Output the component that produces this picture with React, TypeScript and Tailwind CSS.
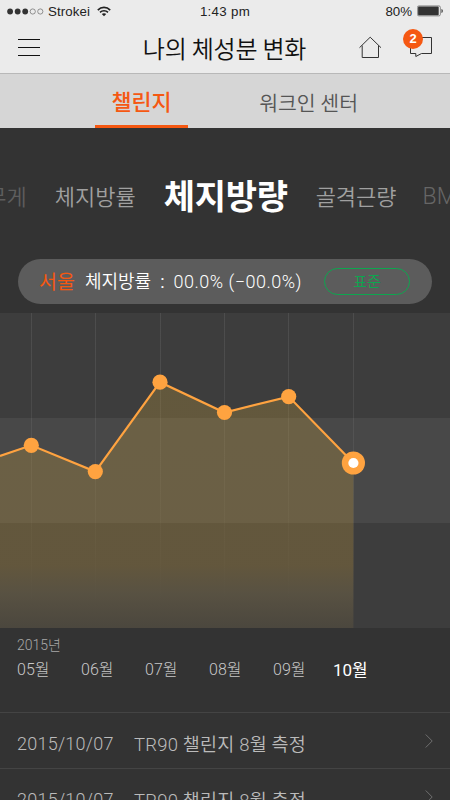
import clsx from "clsx";

const metrics = [
  { label: "몸무게", className: "text-[22px] font-[350] text-[#5e5e5e]" },
  { label: "체지방률", className: "text-[22px] font-[350] text-[#a0a0a0]" },
  { label: "체지방량", className: "text-[34px] font-bold text-white tracking-[-0.3px]" },
  { label: "골격근량", className: "text-[22px] font-[350] text-[#a0a0a0]" },
  { label: "BMI", className: "-ml-0.5 pt-1 font-['Roboto'] text-[23px] font-light text-[#666]" },
];

const points = [
  { month: "05", x: 31.3, y: 132.3 },
  { month: "06", x: 95.3, y: 158.6 },
  { month: "07", x: 160, y: 69.2 },
  { month: "08", x: 224.5, y: 99.5 },
  { month: "09", x: 288.7, y: 83.6 },
  { month: "10", x: 353.4, y: 150 },
];

const records = [
  { date: "2015/10/07", title: "TR90 챌린지 8월 측정" },
  { date: "2015/10/07", title: "TR90 챌린지 8월 측정" },
];

function StatusBar() {
  return (
    <div className="grid h-6 grid-cols-[1fr_auto_1fr] items-center pl-[7px] pr-[7px] font-['Liberation_Sans'] text-[13.3px] leading-none text-[#222]">
      <div className="-mt-px flex items-center">
        <svg width="37" height="7" viewBox="0 0 37 7">
          {[0, 1, 2, 3, 4].map((i) => (
            <circle
              key={i}
              cx={3.1 + i * 7.55}
              cy="3.5"
              r={i < 3 ? 2.9 : 2.6}
              fill={i < 3 ? "#333" : "none"}
              stroke={i < 3 ? "none" : "#555"}
              strokeWidth="0.6"
            />
          ))}
        </svg>
        <span className="ml-[4px] tracking-[0.1px]">Strokei</span>
        <svg className="ml-[7px]" width="14" height="11" viewBox="0 0 14 11" fill="none" stroke="#222" strokeWidth="1.6">
          <path d="M0.8 4.1C4.3 0.5 9.7 0.5 13.2 4.1" />
          <path d="M3 6.4C5.3 4.1 8.7 4.1 11 6.4" />
          <path d="M7 10.3L4.8 8.1C6 6.9 8 6.9 9.2 8.1Z" fill="#222" stroke="none" />
        </svg>
      </div>
      <span className="-mt-px tracking-[0.3px]">1:43 pm</span>
      <div className="-mt-px flex items-center justify-end">
        <span className="mr-[5px]">80%</span>
        <svg width="26" height="12" viewBox="0 0 26 12">
          <rect x="0.4" y="0.9" width="23" height="10" rx="1.5" fill="none" stroke="#666" strokeWidth="0.7" />
          <rect x="1.1" y="1.6" width="20.6" height="8.7" rx="0.8" fill="#333" />
          <path d="M24.5 4C26.2 4.6 26.2 7.3 24.5 8Z" fill="#333" />
        </svg>
      </div>
    </div>
  );
}

function Header() {
  return (
    <header className="flex h-[49px] items-center justify-between pl-[18px] pr-[17px]">
      <button aria-label="메뉴" className="w-[73px]">
        <svg width="22" height="19" viewBox="0 0 22 19" stroke="#111" strokeWidth="1.1">
          <path d="M0 0.5H22M0 8.5H22M0 16.5H22" />
        </svg>
      </button>
      <h1 className="-mt-px text-[24px] font-[350] leading-none tracking-[-0.2px] text-[#111]">
        나의 체성분 변화
      </h1>
      <div className="-mt-[3px] flex w-[75px] items-center justify-between">
        <svg width="24" height="24" viewBox="0 0 24 24" fill="none" stroke="#333" strokeWidth="1">
          <path d="M1.5 12.7L12.2 2.2L23 12.7" />
          <path d="M4.2 10.5V22.5H20.5V10.5" />
        </svg>
        <div className="relative">
          <svg width="24" height="24" viewBox="0 0 24 24" fill="none" stroke="#333" strokeWidth="1">
            <path d="M1.5 2.5H22.5V18.5H12.5L6.8 21.5V18.5H1.5V2.5Z" />
          </svg>
          <span className="absolute -left-[6px] -top-[6.5px] flex size-[20px] items-center justify-center rounded-full bg-[#f55812] font-['Liberation_Sans'] text-[13px] font-bold leading-none text-white">
            2
          </span>
        </div>
      </div>
    </header>
  );
}

function Tabs() {
  return (
    <nav className="flex h-[55px] justify-between border-t border-t-[#b8b8b8] bg-[#d6d6d6] pl-[95px] pr-[92px] leading-none">
      <button className="flex w-[93px] items-center justify-center border-b-[3px] border-[#f55812] pt-[3px] text-[21.8px] font-medium text-[#f55812]">
        챌린지
      </button>
      <button className="flex items-center pt-[2px] text-[20.5px] font-[350] text-[#555]">
        워크인 센터
      </button>
    </nav>
  );
}

function Chart() {
  const line = points.map((p) => `L${p.x} ${p.y}`).join("");

  return (
    <svg className="block" width="450" height="315" viewBox="0 0 450 315">
      <defs>
        <linearGradient id="area" x1="0" y1="0" x2="0" y2="315" gradientUnits="userSpaceOnUse">
          <stop offset="0" stopColor="#d4ac3c" stopOpacity="0.25" />
          <stop offset="0.8" stopColor="#d4a43c" stopOpacity="0.25" />
          <stop offset="0.89" stopColor="#b99a55" stopOpacity="0.22" />
          <stop offset="1" stopColor="#857042" stopOpacity="0.2" />
        </linearGradient>
        <linearGradient id="grid" x1="0" y1="0" x2="0" y2="315" gradientUnits="userSpaceOnUse">
          <stop offset="0.15" stopColor="#fff" stopOpacity="0.08" />
          <stop offset="0.5" stopColor="#fff" stopOpacity="0.05" />
          <stop offset="0.93" stopColor="#fff" stopOpacity="0" />
        </linearGradient>
      </defs>
      <rect width="450" height="315" fill="#3d3d3d" />
      <rect y="105" width="450" height="105" fill="#484848" />
      {points.map((p) => (
        <rect key={p.month} x={Math.floor(p.x)} width="1" height="315" fill="url(#grid)" />
      ))}
      <path d={`M0 143${line}V315H0Z`} fill="url(#area)" />
      <path d={`M0 143${line}`} fill="none" stroke="#ffa340" strokeWidth="2.2" />
      {points.slice(0, -1).map((p) => (
        <circle key={p.month} cx={p.x} cy={p.y} r="7.6" fill="#ffa340" />
      ))}
      <circle cx="353.4" cy="150" r="11.6" fill="#ffa340" />
      <circle cx="353.4" cy="150" r="5.1" fill="#fff" />
    </svg>
  );
}

export default function App() {
  return (
    <div className="h-[800px] w-[450px] overflow-hidden bg-[#333] font-['Noto_Sans_CJK_KR',sans-serif]">
      <div className="bg-[#ebebeb]">
        <StatusBar />
        <Header />
      </div>
      <Tabs />

      {/* Metric carousel */}
      <div className="-ml-[34px] flex h-[131px] items-center gap-7 whitespace-nowrap pt-[2px] leading-none">
        {metrics.map((m) => (
          <span key={m.label} className={clsx("shrink-0", m.className)}>
            {m.label}
          </span>
        ))}
      </div>

      {/* Current value */}
      <div className="mx-[18px] flex h-[45px] items-center rounded-full bg-[#5c5c5c] pl-[21px] pr-[22px] font-['Roboto','Noto_Sans_CJK_KR',sans-serif] text-[18px] leading-none text-white">
        <span className="pt-[2px] text-[19.5px] text-[#f55812]">서울</span>
        <span className="ml-[10px] pt-px font-[350]">체지방률</span>
        <span className="ml-[9px]">:</span>
        <span className="ml-[9px] font-light tracking-[0.5px]">00.0% (−00.0%)</span>
        <span className="ml-auto flex h-[27px] w-[86px] items-center justify-center rounded-full border-[1.5px] border-[#0da64f] pt-px text-[15px] font-[350] text-[#0da64f]">
          표준
        </span>
      </div>

      <div className="mt-[9px]">
        <Chart />
      </div>

      {/* Month axis */}
      <div className="h-[84px] pl-[17px] pt-[9px] font-['Roboto','Noto_Sans_CJK_KR',sans-serif] leading-none text-[#c8c8c8]">
        <p className="text-[14px] font-light leading-4 text-[#a8a8a8]">2015년</p>
        <div className="mt-[8px] flex h-[18px] items-center text-[16px] font-light">
          {points.map((p, i) => (
            <span
              key={p.month}
              className={clsx(
                i === points.length - 1
                  ? "-ml-1 text-[17px] font-normal text-white"
                  : "w-16 shrink-0",
              )}
            >
              {p.month}월
            </span>
          ))}
        </div>
      </div>

      {records.map((r, i) => (
        <div
          key={i}
          className="flex h-14 items-center border-t border-[#444] pl-[17px] pr-[17px] pt-[6px] font-['Roboto','Noto_Sans_CJK_KR',sans-serif] text-[18px] font-[350] leading-none text-[#bbb]"
        >
          <span className="w-[117px] font-light tracking-[0.25px]">{r.date}</span>
          <span className="pt-[3px] text-[18.5px] tracking-[0.2px]">{r.title}</span>
          <svg className="-mt-[6px] ml-auto" width="8" height="14" viewBox="0 0 8 14" fill="none" stroke="#777" strokeWidth="0.9">
            <path d="M0.7 0.5L7.2 7L0.7 13.5" />
          </svg>
        </div>
      ))}
    </div>
  );
}
